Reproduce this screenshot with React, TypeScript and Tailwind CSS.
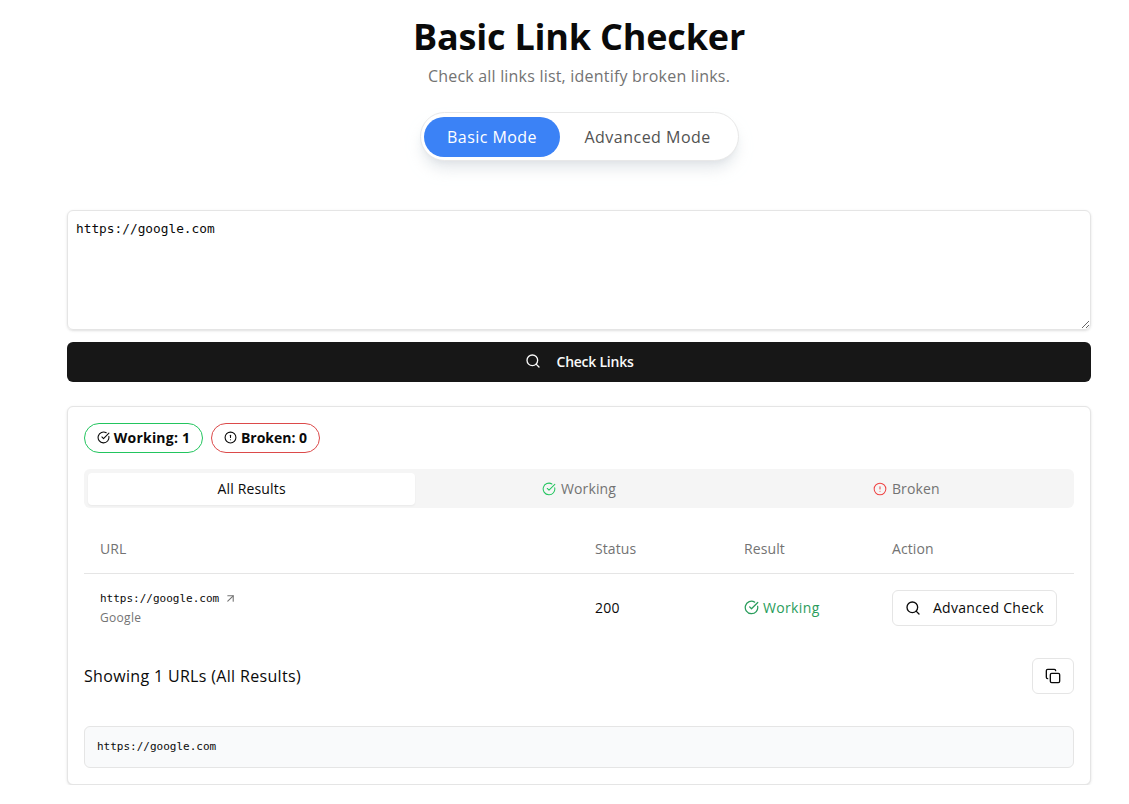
import { useState } from 'react'
import { AlertCircle, ArrowUpRight, CheckCircle, Copy, Search } from 'lucide-react'

const sans = 'font-["Open_Sans","Noto_Sans",sans-serif]'
const mono = 'font-["DejaVu_Sans_Mono","Liberation_Mono",monospace]'

export default function App() {
  const [urls, setUrls] = useState('https://google.com')

  return (
    <div className={`${sans} w-[1158px] bg-white px-[67px] text-[#0a0a0a]`}>
      {/* Header */}
      <div className="flex flex-col items-center">
        <h1 className="mt-[12px] h-[50px] text-[36px] leading-[50px] font-bold tracking-[-0.2px] text-[#0a0a0a]">Basic Link Checker</h1>
        <p className="mt-[2px] h-[24px] text-[16px] leading-[24px] tracking-[0.2px] text-[#737373]">Check all links list, identify broken links.</p>
        <div className="mt-[24px] flex h-[49px] w-[319px] items-center rounded-full border border-[#e8e8e8] bg-white pl-[3px] shadow-lg shadow-gray-300/60">
          <button className="h-[40px] w-[136px] rounded-full bg-[#3b82f6] pl-[1px] text-[16px] tracking-[0.45px] text-white">Basic Mode</button>
          <button className="ml-[25px] text-[16px] tracking-[0.48px] text-[#525252]">Advanced Mode</button>
        </div>
      </div>

      {/* Input */}
      <textarea
        value={urls}
        onChange={(e) => setUrls(e.target.value)}
        className={`${mono} mt-[49px] block h-[120px] w-full rounded-md border border-[#e5e5e5] px-[8px] py-[8px] text-[12.8px] leading-[20px] text-[#0a0a0a] shadow-sm outline-none`}
      />
      <button className="mt-[12px] flex h-[40px] w-full items-center justify-center gap-[16px] rounded-md bg-[#171717] pb-[2px] text-[14px] font-semibold tracking-[-0.25px] text-[#fafafa]">
        <Search className="h-[16px] w-[16px]" strokeWidth={2} />
        Check Links
      </button>

      {/* Results */}
      <div className="mt-[24px] h-[379px] rounded-md border border-[#e5e5e5] bg-white px-[16px] pt-[16px] shadow-sm">
        <div className="flex gap-[8px]">
          <span className="flex h-[30px] w-[119px] items-center justify-center gap-[4px] rounded-full border border-[#22c55e] pb-[1px] text-[14px] font-bold tracking-[0.2px]">
            <CheckCircle className="h-[13px] w-[13px]" />
            Working: 1
          </span>
          <span className="flex h-[30px] w-[109px] items-center justify-center gap-[4px] rounded-full border border-[#dc4a4a] pb-[1px] text-[14px] font-bold tracking-[0px]">
            <AlertCircle className="h-[13px] w-[13px]" />
            Broken: 0
          </span>
        </div>

        {/* Tabs */}
        <div className="mt-[16px] flex h-[39px] items-center rounded-md bg-[#f5f5f5] px-[4px] text-[14px] tracking-[0.15px]">
          <div className="flex h-[32px] flex-1 items-center justify-center rounded-sm bg-white shadow-xs">All Results</div>
          <div className="flex h-[32px] flex-1 items-center justify-center gap-[5px] text-[#737373]">
            <CheckCircle className="h-[14px] w-[14px] text-[#22c55e]" strokeWidth={1.75} />
            Working
          </div>
          <div className="flex h-[32px] flex-1 items-center justify-center gap-[5px] text-[#737373]">
            <AlertCircle className="h-[14px] w-[14px] text-[#ef4444]" strokeWidth={1.75} />
            Broken
          </div>
        </div>

        {/* Table */}
        <table className="mt-[16px] w-full table-fixed text-left text-[14px] tracking-[0.1px]">
          <thead>
            <tr className="h-[49px] border-b border-[#e5e5e5] text-[#737373]">
              <th className="w-[495px] px-[16px] font-normal">URL</th>
              <th className="w-[149px] px-[16px] font-normal">Status</th>
              <th className="w-[148px] px-[16px] font-normal">Result</th>
              <th className="px-[16px] font-normal">Action</th>
            </tr>
          </thead>
          <tbody>
            <tr className="h-[69px]">
              <td className="px-[16px] pt-[2px]">
                <div className={`${mono} flex items-center gap-[5px] text-[11px] leading-[16px] tracking-normal`}>
                  https://google.com
                  <ArrowUpRight className="h-[13px] w-[13px] text-[#737373]" />
                </div>
                <div className="mt-[2px] text-[12px] leading-[18px] tracking-[0.3px] text-[#737373]">Google</div>
              </td>
              <td className="px-[16px] tracking-[0.3px]">200</td>
              <td className="px-[16px] tracking-[0.35px]">
                <span className="flex items-center gap-[4px] text-[#2a9d5c]">
                  <CheckCircle className="h-[15px] w-[15px]" />
                  Working
                </span>
              </td>
              <td className="px-[16px] tracking-[0.3px]">
                <button className="flex h-[36px] w-[165px] items-center justify-center gap-[12px] rounded-md border border-[#e5e5e5] bg-white">
                  <Search className="h-[16px] w-[16px]" />
                  Advanced Check
                </button>
              </td>
            </tr>
          </tbody>
        </table>

        {/* Url list */}
        <div className="mt-[16px] flex items-center justify-between">
          <span className="text-[16px] tracking-[0.33px]">Showing 1 URLs (All Results)</span>
          <button className="flex h-[36px] w-[42px] items-center justify-center rounded-md border border-[#e5e5e5] bg-white">
            <Copy className="h-[16px] w-[16px]" />
          </button>
        </div>
        <div className={`${mono} mt-[32px] flex h-[42px] items-center rounded-md border border-[#e5e5e5] bg-[#f9fafb] px-[12px] pt-[1px] text-[11px]`}>
          https://google.com
        </div>
      </div>
    </div>
  )
}
